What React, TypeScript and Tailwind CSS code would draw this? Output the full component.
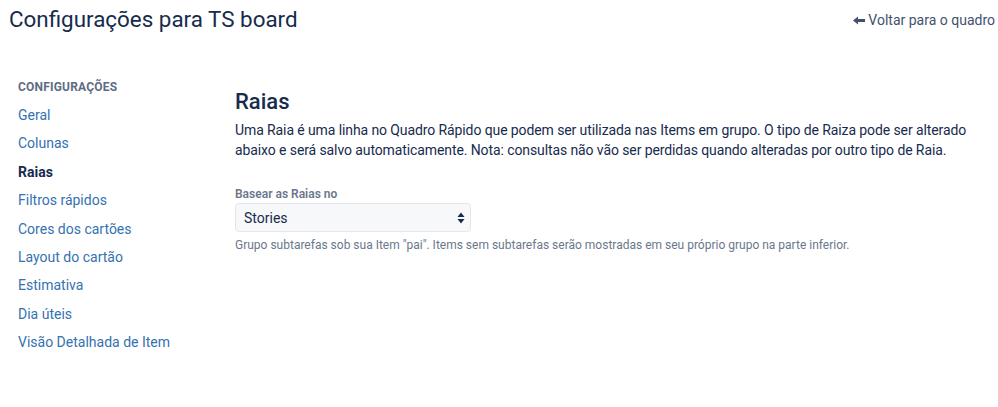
const navItems = [
  { label: 'Geral', active: false },
  { label: 'Colunas', active: false },
  { label: 'Raias', active: true },
  { label: 'Filtros rápidos', active: false },
  { label: 'Cores dos cartões', active: false },
  { label: 'Layout do cartão', active: false },
  { label: 'Estimativa', active: false },
  { label: 'Dia úteis', active: false },
  { label: 'Visão Detalhada de Item', active: false },
];

function BackArrow() {
  return (
    <svg width="12" height="9" viewBox="0 0 12 9" className="mr-[3px]">
      <path d="M0 4.5 L5 0.5 L5 3 L12 3 L12 6 L5 6 L5 8.5 Z" fill="#42526E" />
    </svg>
  );
}

function SelectArrows() {
  return (
    <svg width="8" height="12" viewBox="0 0 8 12">
      <path d="M4 0.5 L7.5 5 L0.5 5 Z" fill="#172B4D" />
      <path d="M4 11.5 L7.5 7 L0.5 7 Z" fill="#172B4D" />
    </svg>
  );
}

export default function App() {
  return (
    <div className="bg-white pb-[40px] text-[#172B4D]" style={{ fontFamily: 'Roboto, "Liberation Sans", sans-serif' }}>
      <header className="flex items-start justify-between pl-[9px] pr-[3px] pt-[3px]">
        <h1 className="text-[22.4px] leading-[32px] font-normal text-[#172B4D]">
          Configurações para TS board
        </h1>
        <a className="mt-[7px] flex items-center text-[14px] leading-[20px] text-[#42526E]">
          <BackArrow />
          Voltar para o quadro
        </a>
      </header>

      <div className="flex pt-[44px]">
        <nav className="w-[235px] shrink-0 pl-[18px]">
          <h3 className="text-[12px] leading-[16px] font-bold tracking-[0.2px] text-[#5E6C84] uppercase">
            Configurações
          </h3>
          <ul className="mt-[10px] flex flex-col gap-[8.4px] text-[14px] leading-[20px]">
            {navItems.map((item) => (
              <li key={item.label} className="h-[20px]">
                <a className={item.active ? 'font-bold text-[#172B4D]' : 'text-[#3572B0]'}>{item.label}</a>
              </li>
            ))}
          </ul>
        </nav>

        <main className="flex-1 pr-[20px]">
          <h2 className="mt-[8px] text-[22px] leading-[30px] font-medium">Raias</h2>
          <p className="mt-[3px] max-w-[740px] text-[14px] leading-[20px] tracking-[-0.1px]">
            Uma Raia é uma linha no Quadro Rápido que podem ser utilizada nas Items em grupo. O tipo de Raiza pode ser
            alterado abaixo e será salvo automaticamente. Nota: consultas não vão ser perdidas quando alteradas por
            outro tipo de Raia.
          </p>

          <div className="mt-[26px]">
            <label className="block text-[12px] leading-[16px] font-semibold text-[#6B778C]">Basear as Raias no</label>
            <div className="mt-[1px] flex h-[29px] w-[236px] items-center justify-between rounded-[4px] border border-[#E4E6EA] bg-[#F7F8F9] pl-[8px] pr-[5px]">
              <span className="text-[14px] leading-[20px] text-[#172B4D]">Stories</span>
              <SelectArrows />
            </div>
            <p className="mt-[5px] text-[12px] leading-[16px] text-[#6B778C]">
              Grupo subtarefas sob sua Item "pai". Items sem subtarefas serão mostradas em seu próprio grupo na parte
              inferior.
            </p>
          </div>
        </main>
      </div>
    </div>
  );
}
